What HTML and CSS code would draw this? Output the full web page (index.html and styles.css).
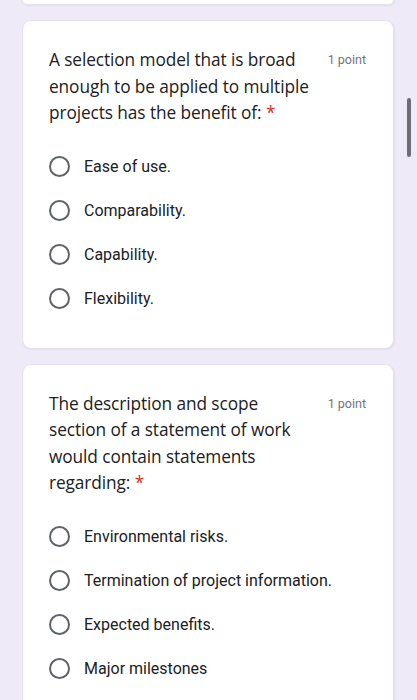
FILE: index.html
```html
<!DOCTYPE html>
<html>
<head>
<meta charset="utf-8">
<link rel="stylesheet" href="styles.css">
</head>
<body>
<div class="page">
  <div class="card card-tail"></div>
  <div class="card">
    <div class="q-head">
      <div class="q-title">A selection model that is broad enough to be applied to multiple projects has the benefit of: <span class="req">*</span></div>
      <div class="q-points">1 point</div>
    </div>
    <div class="options">
      <div class="opt"><span class="radio"></span><span class="opt-label">Ease of use.</span></div>
      <div class="opt"><span class="radio"></span><span class="opt-label">Comparability.</span></div>
      <div class="opt"><span class="radio"></span><span class="opt-label">Capability.</span></div>
      <div class="opt"><span class="radio"></span><span class="opt-label">Flexibility.</span></div>
    </div>
  </div>
  <div class="card">
    <div class="q-head">
      <div class="q-title">The description and scope section of a statement of work would contain statements regarding: <span class="req">*</span></div>
      <div class="q-points">1 point</div>
    </div>
    <div class="options">
      <div class="opt"><span class="radio"></span><span class="opt-label">Environmental risks.</span></div>
      <div class="opt"><span class="radio"></span><span class="opt-label">Termination of project information.</span></div>
      <div class="opt"><span class="radio"></span><span class="opt-label">Expected benefits.</span></div>
      <div class="opt"><span class="radio"></span><span class="opt-label">Major milestones</span></div>
    </div>
  </div>
</div>
<div class="scrollbar"></div>
</body>
</html>
```
FILE: styles.css
```css
html, body {
  margin: 0;
  padding: 0;
  background: #efeaf7;
  height: 100%;
  overflow: hidden;
}
.page {
  padding: 0 23px 0 22px;
  display: flex;
  flex-direction: column;
  gap: 15px;
}
.card {
  background: #fff;
  border: 1px solid #e4e1ea;
  border-radius: 9px;
  box-shadow: 1px 1px 2px rgba(0,0,0,0.06);
  padding: 26px 27px 27px 26px;
}
.card-tail {
  height: 4px;
  padding: 0;
  border-top: none;
  border-radius: 0 0 9px 9px;
}
.q-head {
  display: flex;
  justify-content: space-between;
  align-items: flex-start;
}
.q-title {
  font-family: "Open Sans", sans-serif;
  font-size: 17.3px;
  line-height: 26.5px;
  color: #202124;
  width: 266px;
  letter-spacing: -0.1px;
}
.req {
  color: #d93025;
}
.q-points {
  font-family: Roboto, sans-serif;
  font-size: 12.5px;
  color: #70757a;
  line-height: 26px;
}
.options {
  margin-top: 18px;
  display: flex;
  flex-direction: column;
}
.opt {
  height: 44px;
  display: flex;
  align-items: center;
}
.radio {
  width: 17px;
  height: 17px;
  border: 2px solid #5f6368;
  border-radius: 50%;
  flex: none;
  margin-right: 14px;
}
.opt-label {
  font-family: Roboto, sans-serif;
  font-size: 16px;
  color: #202124;
}
.scrollbar {
  position: fixed;
  left: 407px;
  top: 98px;
  width: 4px;
  height: 59px;
  border-radius: 2px;
  background: #6f6c78;
}
```
